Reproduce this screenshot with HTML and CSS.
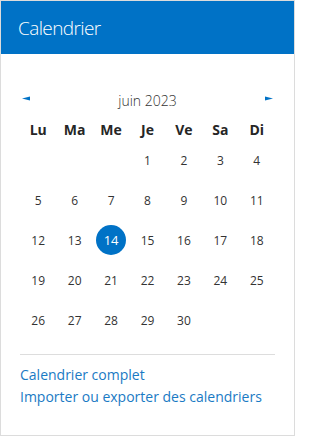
FILE: index.html
```html
<!DOCTYPE html>
<html lang="fr">
<head>
<meta charset="utf-8">
<link rel="stylesheet" href="styles.css">
</head>
<body>
<div class="panel">
  <div class="header">Calendrier</div>
  <div class="content">
    <div class="nav">
      <svg class="arrow" width="8" height="5" viewBox="0 0 8 5"><polygon points="0,2.5 8,0.5 8,4.5" fill="#0072c6"/></svg>
      <span class="month">juin 2023</span>
      <svg class="arrow" width="8" height="5" viewBox="0 0 8 5"><polygon points="8,2.5 0,0.5 0,4.5" fill="#0072c6"/></svg>
    </div>
    <div class="grid">
      <div class="wd">Lu</div><div class="wd">Ma</div><div class="wd">Me</div><div class="wd">Je</div><div class="wd">Ve</div><div class="wd">Sa</div><div class="wd">Di</div>
      <div class="d"></div><div class="d"></div><div class="d"></div><div class="d">1</div><div class="d">2</div><div class="d">3</div><div class="d">4</div>
      <div class="d">5</div><div class="d">6</div><div class="d">7</div><div class="d">8</div><div class="d">9</div><div class="d">10</div><div class="d">11</div>
      <div class="d">12</div><div class="d">13</div><div class="d"><span class="today">14</span></div><div class="d">15</div><div class="d">16</div><div class="d">17</div><div class="d">18</div>
      <div class="d">19</div><div class="d">20</div><div class="d">21</div><div class="d">22</div><div class="d">23</div><div class="d">24</div><div class="d">25</div>
      <div class="d">26</div><div class="d">27</div><div class="d">28</div><div class="d">29</div><div class="d">30</div><div class="d"></div><div class="d"></div>
    </div>
    <div class="links">
      <a class="link" href="#">Calendrier complet</a>
      <a class="link" href="#">Importer ou exporter des calendriers</a>
    </div>
  </div>
</div>
</body>
</html>
```
FILE: styles.css
```css
html, body {
  margin: 0;
  padding: 0;
  background: #ffffff;
}
.panel {
  box-sizing: border-box;
  width: 295px;
  height: 436px;
  border: 1px solid #dcdcdc;
  font-family: "Open Sans", "Noto Sans", sans-serif;
  color: #333333;
}
.header {
  height: 53px;
  background: #0072c6;
  color: #ffffff;
  font-size: 19px;
  font-weight: 300;
  letter-spacing: -0.6px;
  line-height: 55px;
  padding-left: 17px;
}
.content {
  padding: 35px 19px 0 19px;
}
.nav {
  display: flex;
  align-items: center;
  justify-content: space-between;
  height: 22px;
  padding: 0 2px;
}
.arrow {
  display: block;
  margin-top: -4px;
}
.month {
  font-size: 14px;
  font-weight: 300;
  color: #333333;
}
.grid {
  display: grid;
  grid-template-columns: repeat(7, 1fr);
  grid-template-rows: 22px repeat(5, 40px);
  margin-top: 7px;
}
.wd {
  display: flex;
  align-items: center;
  justify-content: center;
  font-size: 14px;
  font-weight: 700;
  color: #262626;
}
.d {
  display: flex;
  align-items: center;
  justify-content: center;
  font-size: 12px;
  color: #333333;
}
.today {
  display: flex;
  align-items: center;
  justify-content: center;
  width: 30px;
  height: 30px;
  border-radius: 50%;
  background: #0072c6;
  color: #ffffff;
  font-size: 13px;
}
.links {
  margin-top: 14px;
  border-top: 1px solid #dddddd;
  padding-top: 9px;
  display: flex;
  flex-direction: column;
}
.link {
  font-size: 14px;
  line-height: 22px;
  color: #1a7ac4;
  text-decoration: none;
}
```
